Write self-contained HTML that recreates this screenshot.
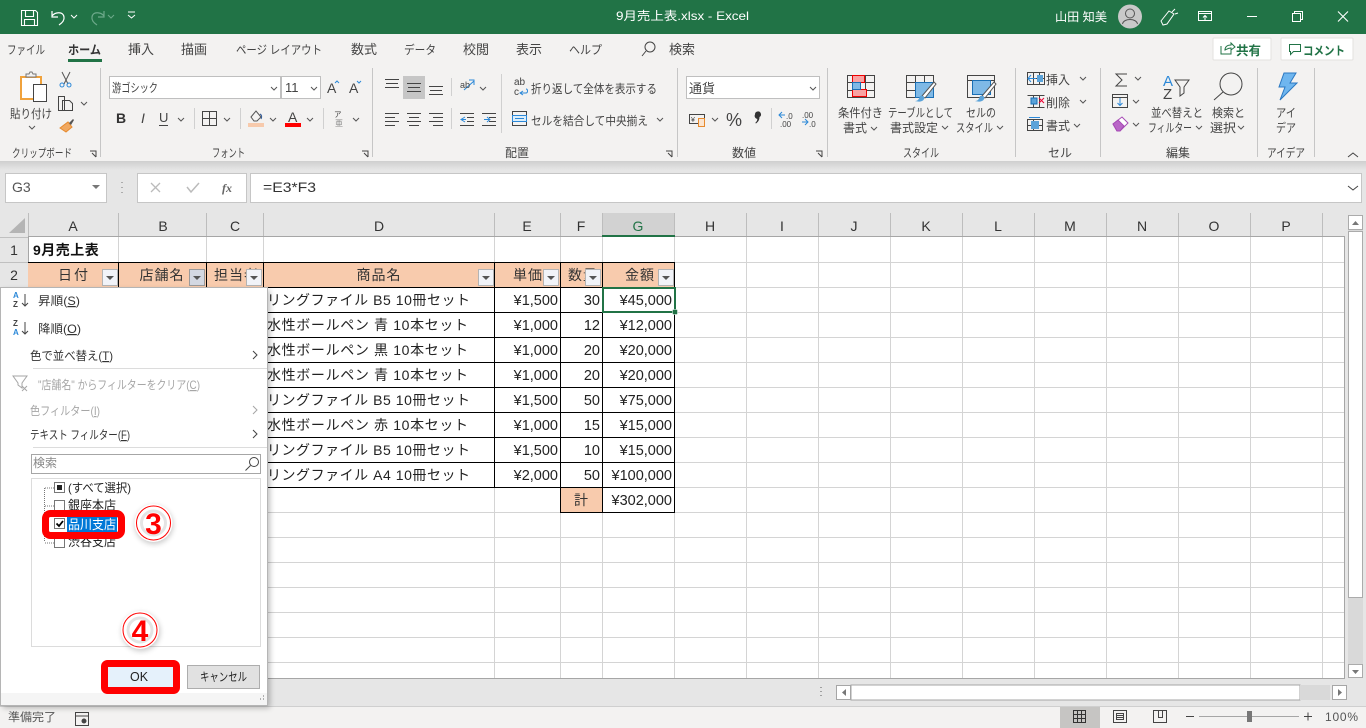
<!DOCTYPE html>
<html lang="ja"><head><meta charset="utf-8"><title>9月売上表.xlsx - Excel</title>
<style>
html,body{margin:0;padding:0;width:1366px;height:728px;overflow:hidden;background:#e6e6e6}
svg{display:block;font-family:"Liberation Sans","Noto Sans CJK JP",sans-serif}
text{fill:#444;font-size:12px}
.t{fill:#fff}
.c{fill:#222;font-size:14px;letter-spacing:1px}
.n{fill:#222;font-size:14.5px;text-anchor:end}
.h{fill:#333;font-size:14px;text-anchor:middle}
.g{fill:#a6a6a6}
.m{fill:#333}
.s{fill:none;stroke:#444;stroke-width:1}
.chev{fill:none;stroke:#555;stroke-width:1}
.b{stroke:#000;stroke-width:1;fill:none}
.bl{stroke:#d4d4d4;stroke-width:1;fill:none}
.sep{stroke:#c6c6c6;stroke-width:1}
</style></head><body>
<svg width="1366" height="728" viewBox="0 0 1366 728" xmlns="http://www.w3.org/2000/svg">
<defs>
<linearGradient id="sh" x1="0" y1="0" x2="0" y2="1"><stop offset="0" stop-color="#cfcfcf"/><stop offset="1" stop-color="#e6e6e6"/></linearGradient>
<filter id="ds" x="-20%" y="-20%" width="140%" height="140%"><feGaussianBlur stdDeviation="3"/></filter>
<g id="fb"><rect x=".5" y=".5" width="15" height="16" fill="#f1f3f8" stroke="#b4b4b4"/><path d="M4 7h8l-4 4z" fill="#555"/></g>
<path id="dn" d="M0 0l3 3 3-3" fill="none" stroke="#555" stroke-width="1"/>
</defs>

<!-- title bar -->
<rect width="1366" height="34" fill="#217346"/>
<path d="M21.500 10.500h14l2 2v13h-16zM25.500 10.500v6h8v-6M24.500 25.500v-6h10v6" fill="none" stroke="#fff" stroke-width="1.100"/>
<path d="M52 11v6h6M52 16c3-4 11-5 12 1 .5 3-2 6-5 8" fill="none" stroke="#fff" stroke-width="1.200"/>
<path d="M71 15l3 3 3-3" fill="none" stroke="#fff"/>
<path d="M104 11v6h-6M104 16c-3-4-11-5-12 1-.5 3 2 6 5 8" fill="none" stroke="#6da98a" stroke-width="1.200"/>
<path d="M108 15l3 3 3-3" fill="none" stroke="#6da98a"/>
<path d="M128 12h7M128 15l3.500 3 3.500-3" fill="none" stroke="#fff"/>
<text class="t" x="616" y="20" textLength="133" lengthAdjust="spacingAndGlyphs">9月売上表.xlsx  -  Excel</text>
<text class="t" x="1055" y="21" textLength="52" lengthAdjust="spacingAndGlyphs">山田 知美</text>
<circle cx="1130" cy="16.500" r="12" fill="#c9c9c9"/>
<circle cx="1130" cy="13.500" r="4.500" fill="none" stroke="#555"/><path d="M1122.500 24c1-6 14-6 15 0" fill="none" stroke="#555"/>
<path d="M1161 21l8-10 5 3-7 10-4 1zM1172 12l3-3M1175 14l3-1" fill="none" stroke="#fff"/>
<path d="M1198.500 11.500h13v9h-13zM1198.500 13.500h13M1205 20v-4M1203 17.500l2-2 2 2" fill="none" stroke="#fff"/>
<path d="M1247 16.500h10" stroke="#fff"/>
<path d="M1292.500 13.500h8v8h-8zM1294.500 13.500v-2h8v8h-2" fill="none" stroke="#fff"/>
<path d="M1338 11.500l10 10M1348 11.500l-10 10" stroke="#fff" stroke-width="1.100"/>

<!-- ribbon -->
<rect y="34" width="1366" height="127" fill="#f3f2f1"/>
<rect y="161" width="1366" height="9" fill="url(#sh)"/>
<text x="7" y="54" textLength="38" lengthAdjust="spacingAndGlyphs">ファイル</text>
<text x="68" y="54" textLength="33" lengthAdjust="spacingAndGlyphs" style="font-weight:bold;fill:#333">ホーム</text>
<rect x="68" y="59" width="34" height="3" fill="#217346"/>
<text x="128" y="54" textLength="26" lengthAdjust="spacingAndGlyphs" style="font-size:13px">挿入</text>
<text x="181" y="54" textLength="26" lengthAdjust="spacingAndGlyphs" style="font-size:13px">描画</text>
<text x="236" y="54" textLength="86" lengthAdjust="spacingAndGlyphs">ページ レイアウト</text>
<text x="351" y="54" textLength="26" lengthAdjust="spacingAndGlyphs" style="font-size:13px">数式</text>
<text x="404" y="54" textLength="32" lengthAdjust="spacingAndGlyphs">データ</text>
<text x="463" y="54" textLength="26" lengthAdjust="spacingAndGlyphs" style="font-size:13px">校閲</text>
<text x="516" y="54" textLength="26" lengthAdjust="spacingAndGlyphs" style="font-size:13px">表示</text>
<text x="569" y="54" textLength="33" lengthAdjust="spacingAndGlyphs">ヘルプ</text>
<circle cx="650" cy="47" r="5" class="s"/><path d="M646 51l-4 5" class="s"/>
<text x="669" y="54" textLength="26" lengthAdjust="spacingAndGlyphs" style="font-size:13px">検索</text>
<rect x="1213" y="38" width="58" height="22" rx="1" fill="#fff" stroke="#e3e1df"/>
<path d="M1221 46v8h10v-4M1225 50c0-3 2-5 6-5v-2l4 4-4 3v-2c-3 0-4 1-6 2z" fill="none" stroke="#217346"/>
<text x="1236" y="55" style="font-weight:bold;fill:#217346;font-size:12.500px" textLength="25" lengthAdjust="spacingAndGlyphs">共有</text>
<rect x="1281" y="38" width="72" height="22" rx="1" fill="#fff" stroke="#e3e1df"/>
<path d="M1289.500 44.500h11v7h-7l-3 3v-3h-1z" fill="none" stroke="#217346"/>
<text x="1303" y="55" style="font-weight:bold;fill:#217346;font-size:12px" textLength="42" lengthAdjust="spacingAndGlyphs">コメント</text>

<!-- separators -->
<path class="sep" d="M100.500 68v89M372.500 68v89M677.500 68v89M827.500 68v89M1015.500 68v89M1100.500 68v89M1257.500 68v89M1314.500 68v89"/>
<path d="M194.500 108v21M240.500 108v21M323.500 108v21M501.500 74v59M451.500 78v18M451.500 108v21M771.500 108v21" stroke="#d0d0d0"/>

<!-- clipboard -->
<rect x="21" y="77" width="20" height="22" fill="#fff" stroke="#f0a23c" stroke-width="2"/>
<path d="M26 77v-3h3l1-2h2l1 2h3v3z" fill="#f3f2f1" stroke="#777"/>
<rect x="33.500" y="84.500" width="13" height="17" fill="#fff" stroke="#444"/>
<text x="10" y="118" textLength="42" lengthAdjust="spacingAndGlyphs">貼り付け</text>
<use href="#dn" x="29" y="126"/>
<path d="M62 72l6 12M70 72l-6 12" stroke="#555" fill="none"/><circle cx="62" cy="85" r="2" fill="none" stroke="#2b88d8"/><circle cx="69" cy="85" r="2" fill="none" stroke="#2b88d8"/>
<path d="M58.500 96.500h6v14h-6zM62.500 100.500h7l3 3v7h-10z" fill="#f3f2f1" stroke="#444"/>
<use href="#dn" x="81" y="102"/>
<path d="M60 128l8-6 4 5-6 5z" fill="#f0a860" stroke="#e68a2e"/><path d="M69 123l4-4 1 1-3 5z" fill="#555"/>
<text x="12" y="157" textLength="60" lengthAdjust="spacingAndGlyphs" style="font-size:11.500px">クリップボード</text>
<path d="M90 151h6v6M92 153l4 4" class="s" stroke-width=".8"/>

<!-- font -->
<rect x="109.500" y="76.500" width="171" height="22" fill="#fff" stroke="#bfbfbf"/>
<rect x="281.500" y="76.500" width="39" height="22" fill="#fff" stroke="#bfbfbf"/>
<text x="112" y="92" textLength="46" lengthAdjust="spacingAndGlyphs">游ゴシック</text>
<text x="285" y="92" style="font-size:13px">11</text>
<use href="#dn" x="271" y="87"/><use href="#dn" x="311" y="87"/>
<text x="327" y="93" style="font-size:14px">A</text><path d="M335 83l2-2 2 2" fill="none" stroke="#2b88d8"/>
<text x="349" y="93" style="font-size:14px">A</text><path d="M357 81l2 2 2-2" fill="none" stroke="#2b88d8"/>
<text x="116" y="123" style="font-weight:bold;fill:#333;font-size:14px">B</text>
<text x="141" y="123" style="font-style:italic;font-size:14px">I</text>
<text x="159" y="122" style="font-size:13px">U</text><path d="M159 125.500h9" stroke="#444"/>
<use href="#dn" x="178" y="118"/>
<path d="M202.500 111.500h14v14h-14zM209.500 111.500v14M202.500 118.500h14" class="s"/>
<use href="#dn" x="224" y="118"/>
<path d="M251 117l5-6 5 6-4 4h-3z" fill="none" stroke="#555"/><path d="M260 114c2 1 2 3 1 5" stroke="#2b5797" fill="none"/>
<rect x="248" y="123" width="16" height="4" fill="#f7caac"/>
<use href="#dn" x="270" y="118"/>
<text x="288" y="122" style="font-size:14px">A</text>
<rect x="285" y="123" width="16" height="4" fill="#f00"/>
<use href="#dn" x="307" y="118"/>
<text x="334" y="117" style="font-size:7.500px">ア</text><text x="335" y="126" style="font-size:8px;fill:#888">亜</text>
<use href="#dn" x="353" y="118"/>
<text x="212" y="157" textLength="33" lengthAdjust="spacingAndGlyphs">フォント</text>
<path d="M362 151h6v6M364 153l4 4" class="s"/>

<!-- align -->
<rect x="403" y="76" width="22" height="23" fill="#c6c6c6"/>
<path class="s" d="M385 79.500h14M386 83.500h12M385 87.500h14M407 83.500h14M408 87.500h12M407 91.500h14M429 86.500h14M430 90.500h12M429 94.500h14"/>
<path class="s" d="M385 113.500h14M385 117.500h10M385 121.500h14M385 125.500h10M407 113.500h14M409 117.500h10M407 121.500h14M409 125.500h10M429 113.500h14M433 117.500h10M429 121.500h14M433 125.500h10"/>
<path d="M464 90l10-9M469 80h5v5" fill="none" stroke="#2b88d8"/><text x="460" y="88" style="font-size:9px">ab</text>
<use href="#dn" x="480" y="87"/>
<path class="s" d="M460 113.500h14M467 117.500h7M467 121.500h7M460 125.500h14M482 113.500h14M489 117.500h7M489 121.500h7M482 125.500h14"/>
<path d="M465 117l-4 2.500 4 2.500M461 119.500h5M490 119.500h-6M487 117l3 2.500-3 2.500" fill="none" stroke="#2b88d8"/>
<text x="514" y="85" style="font-size:10px">ab</text><text x="514" y="95" style="font-size:10px">c</text><path d="M520 93h6c2 0 2-4 0-4M523 91l-3 2 3 2" fill="none" stroke="#2b88d8"/>
<text x="531" y="93" textLength="126" lengthAdjust="spacingAndGlyphs">折り返して全体を表示する</text>
<rect x="512.500" y="111.500" width="14" height="14" fill="none" stroke="#444"/><rect x="512.500" y="115.500" width="14" height="6" fill="#dbeefb" stroke="#2b88d8"/><path d="M515 118.500h9" stroke="#2b88d8"/>
<text x="531" y="125" textLength="117" lengthAdjust="spacingAndGlyphs">セルを結合して中央揃え</text>
<use href="#dn" x="657" y="118"/>
<text x="505" y="157" textLength="24" lengthAdjust="spacingAndGlyphs">配置</text>
<path d="M666 151h6v6M668 153l4 4" class="s"/>

<!-- number -->
<rect x="686.500" y="76.500" width="133" height="22" fill="#fff" stroke="#bfbfbf"/>
<text x="689" y="93" textLength="26" lengthAdjust="spacingAndGlyphs" style="font-size:13px">通貨</text>
<use href="#dn" x="810" y="87"/>
<path d="M689.500 114.500h15v9h-15z" fill="none" stroke="#444"/>
<text x="691" y="122" style="font-size:7px">¥</text>
<rect x="698.500" y="118.500" width="6" height="8" fill="#fbe5d0" stroke="#e68a2e"/>
<use href="#dn" x="712" y="118"/>
<text x="726" y="126" style="font-size:18px;fill:#444">%</text>
<path d="M755 114.500a3 3 0 1 1 4.500 2.500c0 3-1.500 5-3.500 6.500l-.7-.6c1.400-1.300 2-2.500 2-4a3 3 0 0 1-2.300-4.400z" fill="#333"/>
<path d="M779 115h6M782 112l-3 3 3 3M802 122h6M805 119l3 3-3 3" fill="none" stroke="#2b88d8"/>
<text x="786" y="119" style="font-size:8px">.0</text><text x="780" y="127" style="font-size:8px">.00</text>
<text x="802" y="118" style="font-size:8px">.00</text><text x="809" y="127" style="font-size:8px">.0</text>
<text x="732" y="157" textLength="24" lengthAdjust="spacingAndGlyphs">数値</text>
<path d="M816 151h6v6M818 153l4 4" class="s"/>

<!-- styles -->
<g fill="none" stroke="#444">
<rect x="847.500" y="75.500" width="27" height="22"/><path d="M847.500 82.500h27M847.500 90.500h27M856.500 75.500v22M865.500 75.500v22"/>
</g>
<rect x="852.500" y="75.500" width="12" height="7" fill="#f9a2a2" stroke="#e00"/><rect x="852.500" y="89.500" width="14" height="7" fill="#f9a2a2" stroke="#e00"/>
<rect x="852.500" y="82.500" width="8" height="7" fill="#7fb9e6" stroke="#1a6fb5"/>
<g fill="none" stroke="#444">
<rect x="906.500" y="75.500" width="27" height="22"/><path d="M906.500 82.500h27M906.500 90.500h27M915.500 75.500v22M924.500 75.500v22"/>
</g>
<rect x="915.500" y="82.500" width="18" height="15" fill="#7fb9e6" stroke="#1a6fb5"/>
<path d="M922 96l12-14 2 2-11 14z" fill="#fff" stroke="#555"/><path d="M915 101c3 0 4-2 5-5 3-1 5 1 4 3-1 3-6 3-9 2z" fill="#5ba3d9"/>
<rect x="967.500" y="75.500" width="27" height="22" fill="none" stroke="#444"/><path d="M967.500 80.500h27" stroke="#444"/>
<rect x="972.500" y="80.500" width="18" height="14" fill="#7fb9e6" stroke="#1a6fb5"/>
<path d="M982 96l12-14 2 2-11 14z" fill="#fff" stroke="#555"/><path d="M975 101c3 0 4-2 5-5 3-1 5 1 4 3-1 3-6 3-9 2z" fill="#5ba3d9"/>
<text x="838" y="117" textLength="45" lengthAdjust="spacingAndGlyphs">条件付き</text>
<text x="843" y="132" textLength="24" lengthAdjust="spacingAndGlyphs">書式</text><use href="#dn" x="871" y="127"/>
<text x="888" y="117" textLength="65" lengthAdjust="spacingAndGlyphs">テーブルとして</text>
<text x="890" y="132" textLength="48" lengthAdjust="spacingAndGlyphs">書式設定</text><use href="#dn" x="942" y="126"/>
<text x="966" y="117" textLength="30" lengthAdjust="spacingAndGlyphs">セルの</text>
<text x="956" y="132" textLength="37" lengthAdjust="spacingAndGlyphs">スタイル</text><use href="#dn" x="997" y="126"/>
<text x="903" y="157" textLength="36" lengthAdjust="spacingAndGlyphs">スタイル</text>

<!-- cells -->
<g fill="none" stroke="#444"><rect x="1027.500" y="72.500" width="17" height="12"/><path d="M1033.500 72.500v12M1039.500 72.500v12M1027.500 78.500h17"/></g>
<path d="M1028 78.500h8M1031 75l-3 3.500 3 3.500" fill="none" stroke="#2b88d8"/><rect x="1037" y="75" width="6" height="7" fill="#5ba3d9"/>
<text x="1046" y="84" textLength="24" lengthAdjust="spacingAndGlyphs">挿入</text><use href="#dn" x="1080" y="77"/>
<g fill="none" stroke="#444"><path d="M1027.500 95.500h17M1027.500 107.500h17M1033.500 95.500v12M1039.500 95.500v12"/></g>
<rect x="1031" y="98" width="6" height="6" fill="#5ba3d9" stroke="#1a6fb5"/><path d="M1039 98l5 5M1044 98l-5 5" stroke="#e03"/>
<text x="1046" y="107" textLength="24" lengthAdjust="spacingAndGlyphs">削除</text><use href="#dn" x="1080" y="100"/>
<g fill="none" stroke="#444"><rect x="1027.500" y="119.500" width="15" height="11"/><path d="M1033.500 119.500v11M1027.500 125.500h15"/></g>
<rect x="1031" y="121" width="8" height="8" fill="#5ba3d9"/><path d="M1029 117.500h11" stroke="#2b88d8"/>
<text x="1046" y="130" textLength="24" lengthAdjust="spacingAndGlyphs">書式</text><use href="#dn" x="1074" y="124"/>
<text x="1048" y="157" textLength="24" lengthAdjust="spacingAndGlyphs">セル</text>

<!-- edit -->
<path d="M1127 74h-11l6 6-6 6h11" fill="none" stroke="#444"/><use href="#dn" x="1135" y="77"/>
<rect x="1112.500" y="94.500" width="15" height="13" fill="none" stroke="#444"/><path d="M1112.500 97.500h15" stroke="#444"/><path d="M1120 98v7M1117.500 103l2.500 2.500 2.500-2.500" fill="none" stroke="#2b88d8"/><use href="#dn" x="1133" y="100"/>
<path d="M1113 124l9-7 6 6-8 8h-3z" fill="#fff" stroke="#a64ab5"/><path d="M1113 124l5-4 6 6-4 5h-3z" fill="#b966c7" stroke="#a64ab5"/><use href="#dn" x="1133" y="123"/>
<text x="1163" y="86" style="font-size:15px;fill:#2b88d8">A</text>
<text x="1163" y="99" style="font-size:15px;fill:#444">Z</text>
<path d="M1175 80h14l-5 7v6l-4 3v-9z" fill="none" stroke="#444"/>
<circle cx="1231" cy="84" r="11" fill="none" stroke="#444"/><path d="M1223 92l-9 8" stroke="#444"/>
<text x="1151" y="117" textLength="52" lengthAdjust="spacingAndGlyphs">並べ替えと</text>
<text x="1148" y="132" textLength="44" lengthAdjust="spacingAndGlyphs">フィルター</text><use href="#dn" x="1196" y="126"/>
<text x="1212" y="117" textLength="33" lengthAdjust="spacingAndGlyphs">検索と</text>
<text x="1210" y="132" textLength="26" lengthAdjust="spacingAndGlyphs">選択</text><use href="#dn" x="1238" y="126"/>
<text x="1166" y="157" textLength="24" lengthAdjust="spacingAndGlyphs">編集</text>

<!-- idea -->
<path d="M1284 73h12l-6 10h7l-17 17 5-13h-6z" fill="#6fb6ef" stroke="#2b78c2"/>
<text x="1276" y="117" textLength="20" lengthAdjust="spacingAndGlyphs">アイ</text>
<text x="1276" y="132" textLength="20" lengthAdjust="spacingAndGlyphs">デア</text>
<text x="1267" y="157" textLength="38" lengthAdjust="spacingAndGlyphs">アイデア</text>
<path d="M1348 157l5-4 5 4" fill="none" stroke="#444"/>

<!-- formula bar -->
<rect y="170" width="1366" height="43" fill="#e6e6e6"/>
<rect x="5.500" y="173.500" width="101" height="29" fill="#fff" stroke="#c6c6c6"/>
<text x="12" y="192" style="font-size:14px;fill:#555">G3</text>
<path d="M92 185h8l-4 4z" fill="#777"/>
<path d="M122 182v1M122 187v1M122 192v1" stroke="#999" stroke-width="1.500"/>
<rect x="137.500" y="173.500" width="109" height="29" fill="#fff" stroke="#c6c6c6"/>
<path d="M151 183l9 9M160 183l-9 9" stroke="#bbb" stroke-width="1.300"/>
<path d="M187 187l4 5 8-9" fill="none" stroke="#bbb" stroke-width="1.500"/>
<text x="222" y="192" style="font-size:12px;font-style:italic;font-family:'Liberation Serif',serif;font-weight:bold;fill:#666">fx</text>
<rect x="250.500" y="173.500" width="1111" height="29" fill="#fff" stroke="#c6c6c6"/>
<text x="263" y="192" style="font-size:13.500px;fill:#333" textLength="53" lengthAdjust="spacingAndGlyphs">=E3*F3</text>
<path d="M1348 186l5 4 5-4" fill="none" stroke="#444"/>

<!-- sheet -->
<rect x="0" y="213" width="1345" height="466" fill="#fff"/>
<rect x="0" y="213" width="1345" height="24" fill="#e6e6e6"/>
<rect x="0" y="237" width="28" height="442" fill="#e6e6e6"/>
<rect x="602" y="213" width="72" height="24" fill="#d2d2d2"/>
<path d="M25 218v15H9z" fill="#b4b4b4"/>
<path d="M28.500 213v24M118.500 213v24M206.500 213v24M263.500 213v24M494.500 213v24M560.500 213v24M602.500 213v24M674.500 213v24M746.500 213v24M818.500 213v24M890.500 213v24M962.500 213v24M1034.500 213v24M1106.500 213v24M1178.500 213v24M1250.500 213v24M1322.500 213v24" stroke="#bdbdbd"/>
<g class="bl">
<path d="M118.500 237v25M206.500 237v25M263.500 237v25M494.500 237v25M560.500 237v25M602.500 237v25"/>
<path d="M674.500 237v442M746.500 237v442M818.500 237v442M890.500 237v442M962.500 237v442M1034.500 237v442M1106.500 237v442M1178.500 237v442M1250.500 237v442M1322.500 237v442"/>
<path d="M494.500 487v192M560.500 512v167M602.500 512v167M263.500 487v192"/>
<path d="M674 262.500h671M674 287.500h671M674 312.500h671M674 337.500h671M674 362.500h671M674 387.500h671M674 412.500h671M674 437.500h671M674 462.500h671M674 487.500h671M674 512.500h671M268 512.500h406M268 537.500h1077M268 562.500h1077M268 587.500h1077M268 612.500h1077M268 637.500h1077M268 662.500h1077M264 487.500h297"/>
</g>
<path d="M0 678.500h1345M1344.500 237v442M28 236.500h1317M28.500 237v442" stroke="#a6a6a6" fill="none"/>
<rect x="602" y="235" width="73" height="2" fill="#217346"/>
<path d="M0 237.500h28M0 262.500h28M0 287.500h28" stroke="#c0c0c0"/>

<text class="h" x="73" y="231" style="fill:#333">A</text><text class="h" x="163" y="231">B</text><text class="h" x="235" y="231">C</text><text class="h" x="379" y="231">D</text><text class="h" x="527" y="231">E</text><text class="h" x="581" y="231">F</text><text class="h" x="638" y="231" style="fill:#217346">G</text><text class="h" x="710" y="231">H</text><text class="h" x="782" y="231">I</text><text class="h" x="854" y="231">J</text><text class="h" x="926" y="231">K</text><text class="h" x="998" y="231">L</text><text class="h" x="1070" y="231">M</text><text class="h" x="1142" y="231">N</text><text class="h" x="1214" y="231">O</text><text class="h" x="1286" y="231">P</text>
<text class="h" x="14" y="255">1</text><text class="h" x="14" y="280">2</text>

<!-- table -->
<text x="33" y="255" style="font-size:14px;font-weight:bold;fill:#111;letter-spacing:.5px">9月売上表</text>
<rect x="28" y="262" width="647" height="25" fill="#f8cbad"/>
<rect x="560" y="487" width="43" height="25" fill="#f8cbad"/>
<text class="h" x="74" y="280" style="letter-spacing:2px">日付</text>
<text class="h" x="162" y="280" style="letter-spacing:1px">店舗名</text>
<text x="214" y="280" style="font-size:14px;fill:#333;letter-spacing:1px">担当者</text>
<text class="h" x="379" y="280" style="letter-spacing:1px">商品名</text>
<text class="h" x="528" y="280" style="letter-spacing:1px">単価</text>
<text x="568" y="280" style="font-size:14px;fill:#333;letter-spacing:1px">数量</text>
<text class="h" x="640" y="280" style="letter-spacing:1px">金額</text>
<use href="#fb" x="102" y="269"/>
<g transform="translate(189 269)"><rect x=".5" y=".5" width="15" height="16" fill="#d3d8e2" stroke="#9a9a9a"/><path d="M4 7h8l-4 4z" fill="#555"/></g>
<use href="#fb" x="246" y="269"/><use href="#fb" x="478" y="269"/><use href="#fb" x="543" y="269"/><use href="#fb" x="585" y="269"/><use href="#fb" x="658" y="269"/>

<text class="c" x="267" y="305" textLength="204">リングファイル B5 10冊セット</text>
<text class="c" x="267" y="330" textLength="202">水性ボールペン 青 10本セット</text>
<text class="c" x="267" y="355" textLength="202">水性ボールペン 黒 10本セット</text>
<text class="c" x="267" y="380" textLength="202">水性ボールペン 青 10本セット</text>
<text class="c" x="267" y="405" textLength="204">リングファイル B5 10冊セット</text>
<text class="c" x="267" y="430" textLength="202">水性ボールペン 赤 10本セット</text>
<text class="c" x="267" y="455" textLength="204">リングファイル B5 10冊セット</text>
<text class="c" x="267" y="480" textLength="204">リングファイル A4 10冊セット</text>
<g>
<text class="n" x="558" y="305">¥1,500</text><text class="n" x="600" y="305">30</text><text class="n" x="672" y="305">¥45,000</text>
<text class="n" x="558" y="330">¥1,000</text><text class="n" x="600" y="330">12</text><text class="n" x="672" y="330">¥12,000</text>
<text class="n" x="558" y="355">¥1,000</text><text class="n" x="600" y="355">20</text><text class="n" x="672" y="355">¥20,000</text>
<text class="n" x="558" y="380">¥1,000</text><text class="n" x="600" y="380">20</text><text class="n" x="672" y="380">¥20,000</text>
<text class="n" x="558" y="405">¥1,500</text><text class="n" x="600" y="405">50</text><text class="n" x="672" y="405">¥75,000</text>
<text class="n" x="558" y="430">¥1,000</text><text class="n" x="600" y="430">15</text><text class="n" x="672" y="430">¥15,000</text>
<text class="n" x="558" y="455">¥1,500</text><text class="n" x="600" y="455">10</text><text class="n" x="672" y="455">¥15,000</text>
<text class="n" x="558" y="480">¥2,000</text><text class="n" x="600" y="480">50</text><text class="n" x="672" y="480">¥100,000</text>
<text class="h" x="581" y="505">計</text><text class="n" x="672" y="505">¥302,000</text>
</g>
<path class="b" d="M28 262.500h647M28 287.500h647M264 312.500h411M264 337.500h411M264 362.500h411M264 387.500h411M264 412.500h411M264 437.500h411M264 462.500h411M264 487.500h411M560 512.500h115"/>
<path class="b" d="M118.500 262v25M206.500 262v25M263.500 262v226M494.500 262v226M560.500 262v251M602.500 262v251M674.500 262v251"/>
<rect x="603" y="288" width="72" height="24" fill="none" stroke="#217346" stroke-width="2"/>
<rect x="672.500" y="309.500" width="5" height="5" fill="#217346" stroke="#fff" stroke-width=".5"/>

<!-- scrollbars -->
<rect x="1345" y="213" width="21" height="493" fill="#e6e6e6"/>
<rect x="1348" y="230" width="15" height="435" fill="#d9d9d9"/>
<rect x="1348.500" y="215.500" width="14" height="14" fill="#fff" stroke="#ababab"/><path d="M1352 225l3.500-4 3.500 4z" fill="#777"/>
<rect x="1348.500" y="231.500" width="14" height="366" fill="#fff" stroke="#ababab"/>
<rect x="1348.500" y="664.500" width="14" height="13" fill="#fff" stroke="#ababab"/><path d="M1352 670h7l-3.500 4z" fill="#777"/>
<rect x="0" y="679" width="1366" height="27" fill="#e6e6e6"/>
<path d="M821 687v1M821 691v1M821 695v1" stroke="#888" stroke-width="1.500"/>
<rect x="836.500" y="685.500" width="14" height="14" fill="#fff" stroke="#a6a6a6"/><path d="M846 689v7l-4-3.500z" fill="#777"/>
<rect x="851" y="685" width="449" height="15" fill="#fff" stroke="#a6a6a6"/>
<rect x="1300" y="685" width="30" height="15" fill="#d9d9d9"/>
<rect x="1332.500" y="685.500" width="14" height="14" fill="#fff" stroke="#a6a6a6"/><path d="M1338 689v7l4-3.500z" fill="#777"/>

<!-- status bar -->
<rect y="706" width="1366" height="22" fill="#f3f2f1"/><path d="M0 706.500h1366" stroke="#cfcfcf"/>
<text x="8" y="721" textLength="48" lengthAdjust="spacingAndGlyphs" style="font-size:11.500px;fill:#555">準備完了</text>
<path d="M75.500 712.500h13v13h-13zM75.500 716h13" class="s"/><circle cx="84" cy="721" r="2.500" fill="#444"/>
<rect x="1060" y="707" width="40" height="21" fill="#c6c5c3"/>
<path d="M1073.500 710.500h12v12h-12zM1077.500 710.500v12M1081.500 710.500v12M1073.500 714.500h12M1073.500 718.500h12" fill="none" stroke="#333"/>
<path d="M1113.500 710.500h13v12h-13zM1116.500 713.500h7v6h-7zM1117 715.500h6M1117 717.500h6" fill="none" stroke="#444"/>
<path d="M1153.500 710.500h13v12h-13zM1158.500 710.500v7h4v-7" fill="none" stroke="#444"/>
<path d="M1186 716.500h8" stroke="#444"/>
<path d="M1199 716.500h100" stroke="#a6a6a6"/>
<rect x="1247" y="711" width="5" height="11" fill="#777"/>
<path d="M1304 716.500h8M1308 712.500v8" stroke="#444"/>
<text x="1325" y="721" textLength="33" style="font-size:12px;fill:#555">100%</text>

<!-- filter menu -->
<rect x="3" y="290" width="267" height="418" fill="#000" opacity=".25" filter="url(#ds)"/>
<rect x=".5" y="287.500" width="267" height="418" fill="#fff" stroke="#b5b5b5"/>
<rect x="1" y="693" width="266" height="12" fill="#f5f5f5"/>
<path d="M260 699h1M263 696h1M263 699h1" stroke="#999" stroke-width="1.500"/>
<text x="13" y="298" style="font-size:8px;font-weight:bold;fill:#2b88d8">A</text><text x="13" y="307" style="font-size:8px;font-weight:bold;fill:#444">Z</text><path d="M25 294v12M22 303l3 3 3-3" fill="none" stroke="#444"/>
<text x="13" y="326" style="font-size:8px;font-weight:bold;fill:#444">Z</text><text x="13" y="335" style="font-size:8px;font-weight:bold;fill:#2b88d8">A</text><path d="M25 322v12M22 331l3 3 3-3" fill="none" stroke="#444"/>
<text class="m" x="38" y="305" textLength="42" lengthAdjust="spacingAndGlyphs">昇順(<tspan text-decoration="underline">S</tspan>)</text>
<text class="m" x="38" y="333" textLength="43" lengthAdjust="spacingAndGlyphs">降順(<tspan text-decoration="underline">O</tspan>)</text>
<text class="m" x="30" y="360" textLength="83" lengthAdjust="spacingAndGlyphs">色で並べ替え(<tspan text-decoration="underline">T</tspan>)</text>
<path d="M253 351l4 4-4 4" fill="none" stroke="#444"/>
<path d="M33 368.500h234M33 447.500h234" stroke="#dcdcdc"/>
<path d="M13 376h14l-5 7v5l-4-3v-2z" fill="none" stroke="#a6a6a6"/><path d="M22 386l5 5M27 386l-5 5" stroke="#a6a6a6"/>
<text class="g" x="38" y="389" textLength="162" lengthAdjust="spacingAndGlyphs">"店舗名" からフィルターをクリア(<tspan text-decoration="underline">C</tspan>)</text>
<text class="g" x="30" y="415" textLength="70" lengthAdjust="spacingAndGlyphs">色フィルター(<tspan text-decoration="underline">I</tspan>)</text>
<path d="M253 406l4 4-4 4" fill="none" stroke="#a6a6a6"/>
<text class="m" x="30" y="439" textLength="100" lengthAdjust="spacingAndGlyphs">テキスト フィルター(<tspan text-decoration="underline">F</tspan>)</text>
<path d="M253 430l4 4-4 4" fill="none" stroke="#444"/>
<rect x="31.500" y="454.500" width="229" height="19" fill="#fff" stroke="#a6a6a6"/>
<text x="33" y="467" textLength="24" lengthAdjust="spacingAndGlyphs" style="fill:#888">検索</text>
<circle cx="254" cy="462" r="4.500" fill="none" stroke="#444"/><path d="M250.500 465.500l-5 5" stroke="#444"/>
<rect x="31.500" y="478.500" width="229" height="168" fill="#fff" stroke="#dcdcdc"/>

<path d="M44.500 488v54M45 488h9M45 506h9M45 524h4M45 543h9" stroke="#777" stroke-dasharray="1 1" fill="none"/>
<rect x="54.500" y="482.500" width="10" height="10" fill="#fff" stroke="#777"/><rect x="57" y="485" width="5" height="5" fill="#222"/>
<text x="68" y="492" textLength="63" lengthAdjust="spacingAndGlyphs" style="fill:#222">(すべて選択)</text>
<rect x="54.500" y="500.500" width="10" height="10" fill="#fff" stroke="#777"/>
<text x="68" y="510" textLength="48" lengthAdjust="spacingAndGlyphs" style="fill:#222;font-size:13px">銀座本店</text>
<rect x="54.500" y="537.500" width="10" height="10" fill="#fff" stroke="#777"/>
<text x="68" y="546" textLength="48" lengthAdjust="spacingAndGlyphs" style="fill:#222;font-size:13px">渋谷支店</text>

<rect x="45.500" y="513.500" width="76" height="22" rx="5" fill="#fff" stroke="#f00" stroke-width="7"/>
<rect x="67" y="517" width="50" height="15" fill="#0078d7"/>
<rect x="54.500" y="518.500" width="10" height="10" fill="#fff" stroke="#777"/>
<path d="M56.500 523.500l2.500 2.500 4-5" fill="none" stroke="#000" stroke-width="1.800"/>
<text x="68" y="529" textLength="48" lengthAdjust="spacingAndGlyphs" style="fill:#fff;font-size:13px">品川支店</text>

<!-- OK / Cancel -->
<rect x="104.500" y="663.500" width="72" height="27" rx="3" fill="#e5f1fb" stroke="#f00" stroke-width="7"/>
<text x="130" y="681" textLength="18" lengthAdjust="spacingAndGlyphs" style="fill:#222;font-size:12.500px">OK</text>
<rect x="187.500" y="665.500" width="72" height="23" fill="#e1e1e1" stroke="#adadad"/>
<text x="200" y="681" textLength="47" lengthAdjust="spacingAndGlyphs" style="fill:#222">キャンセル</text>

<!-- callouts -->
<circle cx="154" cy="525" r="19" fill="#000" opacity=".22" filter="url(#ds)"/>
<circle cx="153.500" cy="523" r="19" fill="#fff"/>
<circle cx="153.500" cy="523" r="17" fill="#fff" stroke="#f00"/>
<circle cx="153.500" cy="523" r="12" fill="none" stroke="#e4e4e4" stroke-width="3"/>
<text x="153.500" y="534" text-anchor="middle" style="font-size:30px;font-weight:bold;fill:#f00">3</text>
<circle cx="141" cy="632" r="19" fill="#000" opacity=".22" filter="url(#ds)"/>
<circle cx="140" cy="630" r="19" fill="#fff"/>
<circle cx="140" cy="630" r="17" fill="#fff" stroke="#f00"/>
<circle cx="140" cy="630" r="12" fill="none" stroke="#e4e4e4" stroke-width="3"/>
<text x="140" y="641" text-anchor="middle" style="font-size:30px;font-weight:bold;fill:#f00">4</text>
</svg>
</body></html>
